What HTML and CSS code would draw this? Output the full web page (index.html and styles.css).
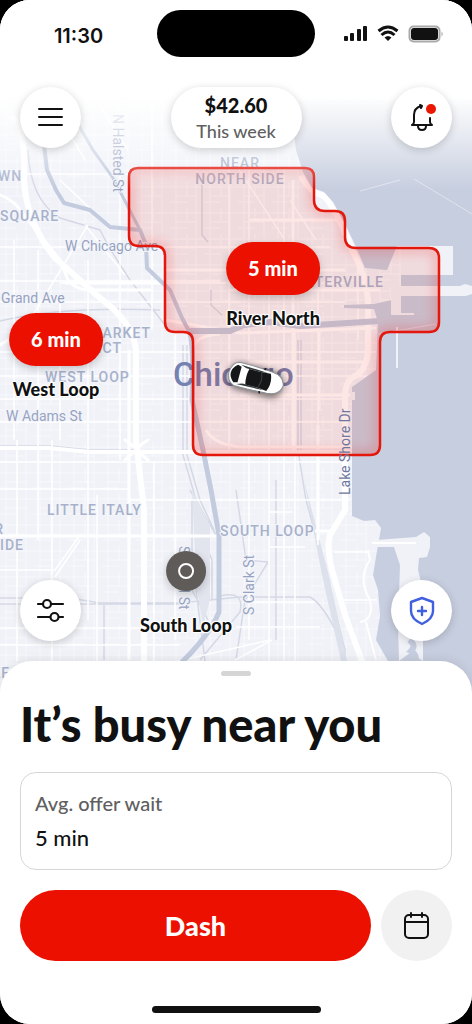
FILE: index.html
```html
<!DOCTYPE html>
<html lang="en">
<head>
  <meta charset="UTF-8">
  <meta name="viewport" content="width=device-width, initial-scale=1">
  <title>Dash</title>
  <link rel="stylesheet" href="styles.css">
</head>
<body>
  <main class="phone">
    <section class="stage">
      <div class="map">
        <svg class="map-art" viewBox="0 0 472 710" preserveAspectRatio="xMidYMin slice" aria-hidden="true">
          <defs>
            <pattern id="blocks" width="34" height="26" patternUnits="userSpaceOnUse">
              <path d="M6 0V26M17 0V14M26 0V26M0 5H34M6 14H26M0 20H17" fill="none" stroke="#fff" stroke-width="1" opacity=".5"/>
            </pattern>
            <linearGradient id="fade" x1="0" y1="0" x2="0" y2="1">
              <stop offset="0" stop-color="#fff"/>
              <stop offset=".5" stop-color="#fff"/>
              <stop offset="1" stop-color="#fff" stop-opacity="0"/>
            </linearGradient>
            <path id="zone" d="M138 168H305Q314 168 314 177V200Q314 211 325 211H335Q345 211 345 221V237Q345 248 356 248H429Q439 248 439 258V322Q439 332 429 332H390Q380 332 380 342V445Q380 455 370 455H203Q193 455 193 445V342Q193 332 183 332H175Q165 332 165 322V256Q165 246 155 246H139Q129 246 129 236V177Q129 168 138 168Z"/>
            <clipPath id="zone-clip"><use href="#zone"/></clipPath>
            <filter id="glow" x="-20%" y="-20%" width="140%" height="140%"><feGaussianBlur stdDeviation="6"/></filter>
            <filter id="car-shadow" x="-30%" y="-50%" width="160%" height="200%"><feGaussianBlur stdDeviation="3"/></filter>
          </defs>

          <rect width="472" height="710" fill="#f0f2f8"/>
          <rect width="472" height="710" fill="url(#blocks)"/>

          <!-- rail lines -->
          <g fill="none" stroke="#d5d9e5" stroke-width="1.5">
            <path d="M28 150Q30 200 60 218L100 230Q110 250 130 280L165 325"/>
            <path d="M0 321Q60 306 160 310M202 180V235L208 242M211 290V305L222 315"/>
            <path d="M0 598H70L100 603H180L240 597H310Q325 605 345 650V665M0 604H180"/>
            <path d="M0 446H50L90 450H140M183 345V455L196 500V590L205 661M187 345V455L200 500L214 530M190 490L216 535M192 500V590L208 620M196 520L212 560V600"/>
            <path d="M298 340V450L306 500L325 570L345 650M301 340V450M276 480V640M236 490L246 560L268 562M268 562L245 600L236 660M104 605V660M220 596Q245 590 240 612L200 660"/>
          </g>
          <path d="M304 480L330 580L347 661H341L322 575Z" fill="#dde1eb"/>
          <path d="M192 490L210 525V600L203 625L197 590Z" fill="#e2e5ee"/>

          <!-- secondary streets -->
          <g fill="none" stroke="#fff" stroke-width="1.5">
            <path d="M0 174H129M0 247H330M0 281H220M60 283H350M0 302H345M0 352H380M0 376H380M0 399H345M0 422H345M0 462H345M0 489H130M130 500H350"/>
            <path d="M14 240V440M38 250V540M60 300V440M88 260V620M120 120V460M152 100V330M175 330V640M229 168V455M249 168V640M269 290V661M284 168V661M295 330V661M318 290V545M358 270V340M154 462V661M97 495V661M17 440V661M52 440V661"/>
            <path d="M0 570H55L80 535M55 577L80 540M0 628H150M0 645H180M236 627H320M248 602H315M268 547H305M268 512H292"/>
            <path d="M50 100L85 160M96 100L128 150M160 100L200 150M30 320L88 225M85 225L125 275M60 180L97 215M236 165L285 240M290 200L316 240"/>
            <path d="M334 552H368M343 600H377M178 661L270 640M235 660L272 640"/>
          </g>
          <g fill="none" stroke="#fff" stroke-width="3">
            <path d="M0 536H220M315 531H330M165 270H345M229 290H380M250 220H340M65 283L165 283M129 660V350M165 320L240 333L376 328M194 345Q200 335 220 334M249 362H368M319 330V410M318 425V540M240 395H355"/>
            <path d="M293 180V455M206 430Q215 445 240 447H380"/>
          </g>

          <!-- expressways -->
          <g fill="none" stroke="#fff" stroke-linecap="round" stroke-linejoin="round">
            <path d="M14 118Q26 135 24 180Q26 222 55 258L100 298Q133 322 136 350V440L144 510V661" stroke-width="6"/>
            <path d="M-2 194Q15 200 24 215L60 260L68 280Q75 290 90 290H150" stroke-width="3"/>
            <path d="M-2 448H48L90 452H380" stroke-width="4"/>
            <path d="M125 440L136 448L148 440M125 460L136 450L148 460M0 345L25 330" stroke-width="3"/>
            <path d="M302 178Q310 192 324 196Q338 212 352 250Q366 275 368 300V340Q370 365 357 375Q344 380 345 400V510L330 535Q326 545 332 570L345 615L362 661" stroke-width="6"/>
          </g>

          <!-- river -->
          <g fill="none" stroke="#c3cbde" stroke-linejoin="round">
            <path d="M44 145L47 170L56 190L64 203L90 210L110 227L140 230L146 245L147 268L170 290L182 318L190 333" stroke-width="4"/>
            <path d="M64 100L93 150L113 178L140 230" stroke-width="3"/>
            <path d="M190 331H230L244 325L270 322L300 326L380 321" stroke-width="6"/>
            <path d="M190 333Q194 350 192 400L203 450L211 490L219 535V612Q210 635 180 664" stroke-width="5"/>
          </g>

          <!-- lake, harbour and lagoon -->
          <path d="M290 100L296 150L303 172L312 188L324 192L333 202L346 226L357 249L365 268L387 270L397 246H453V275H401V285H472V100Z" fill="#c7cedf"/>
          <path d="M472 284H401V297H472ZM472 297H392V300L374 304L344 305V308L374 309L378 322L376 370L352 387V516L364 521L375 520L381 528L378 545L373 575L378 590L380 616L376 640L388 661V710H472Z" fill="#c7cedf"/>
          <g fill="#f0f2f8">
            <path d="M401 246H453V275H401ZM391 286H460L465 284L472 286V294L466 296H401V314H391Z"/>
            <path d="M350 392H355V400H350ZM391 313H414V315H391Z"/>
            <path d="M376 540L416 537L424 532L430 537V547L427 557L419 558L418 570L423 590V661L410 653L399 661L398 625L400 565L394 547H376Z"/>
          </g>
          <path d="M409 640Q417 645 411 651Q420 656 412 668" fill="none" stroke="#c7cedf" stroke-width="6"/>
          <g fill="none" stroke="#f0f2f8">
            <path d="M397 327V368" stroke-width="2"/>
            <path d="M360 191L400 180M414 179L472 214M378 334L436 324" opacity=".6"/>
            <path d="M372 543H416M368 550L370 560Q357 578 370 600Q374 620 360 622M366 622L376 660" stroke="#fff" stroke-width="2"/>
          </g>

          <g class="street">
            <text x="65" y="251">W Chicago Ave</text>
            <text x="1" y="303">Grand Ave</text>
            <text x="6" y="421">W Adams St</text>
            <text transform="translate(113 114) rotate(90)">N Halsted St</text>
            <text transform="translate(179 546) rotate(90)">S Canal St</text>
            <text transform="translate(254 615) rotate(-90)">S Clark St</text>
          </g>
          <g class="area">
            <text x="-22" y="181">TOWN</text>
            <text x="0" y="221">SQUARE</text>
            <text x="240" y="168" text-anchor="middle">NEAR</text>
            <text x="240" y="184" text-anchor="middle">NORTH SIDE</text>
            <text x="384" y="287" text-anchor="end">STREETERVILLE</text>
            <text x="151" y="338" text-anchor="end">MARKET</text>
            <text x="122" y="353" text-anchor="end">DISTRICT</text>
            <text x="45" y="382">WEST LOOP</text>
            <text x="47" y="515">LITTLE ITALY</text>
            <text x="4" y="534" text-anchor="end">LOWER</text>
            <text x="24" y="550" text-anchor="end">WEST SIDE</text>
            <text x="220" y="536">SOUTH LOOP</text>
            <text x="10" y="678" text-anchor="end">EF</text>
          </g>
          <text class="city" x="173" y="386">Chicago</text>

          <!-- busy zone -->
          <use href="#zone" fill="#f01400" fill-opacity=".1"/>
          <g clip-path="url(#zone-clip)">
            <use href="#zone" fill="none" stroke="#f01400" stroke-width="10" stroke-opacity=".2" filter="url(#glow)"/>
          </g>
          <use href="#zone" fill="none" stroke="#e3170c" stroke-width="2.5"/>
          <text class="shore" transform="translate(350 495) rotate(-90)">Lake Shore Dr</text>
          <rect width="472" height="190" fill="url(#fade)"/>

          <!-- car -->
          <g transform="translate(256 379) rotate(15)">
            <rect x="-28" y="-12" width="56" height="27" rx="12" fill="#000" opacity=".5" filter="url(#car-shadow)"/>
            <path d="M-20 -12Q-27 -10 -28 0Q-27 10 -20 12L-6 12L14 11Q27 10 28 0Q27 -10 14 -11L-6 -12Z" fill="#fff" stroke="#8b9095"/>
            <path d="M-21 -9Q-26 -5 -26 0Q-26 5 -21 9L-17 8V-8Z" fill="#151719"/>
            <path d="M-18 -10L10 -9L4 -8H-12ZM-18 10L10 9L4 8H-12Z" fill="#33383b"/>
            <path d="M-9 -8H4L13 -9Q17 0 13 9L4 8H-9Q-11 0 -9 -8Z" fill="#151719"/>
            <path d="M4 -7Q7 0 4 7" fill="none" stroke="#3b4044"/>
            <path d="M6 -11L7 -13M6 11L7 13" stroke="#151719" stroke-width="1.5"/>
          </g>
        </svg>

        <button class="pin pin-river">
          <span class="pin-time">5 min</span>
          <span class="pin-name">River North</span>
        </button>
        <button class="pin pin-west">
          <span class="pin-time">6 min</span>
          <span class="pin-name">West Loop</span>
        </button>
        <button class="pin pin-south">
          <span class="pin-dot"></span>
          <span class="pin-name">South Loop</span>
        </button>
      </div>

      <header class="status">
        <time class="clock">11:30</time>
        <div class="island"></div>
        <svg class="signals" width="100" height="18" viewBox="0 0 100 18" aria-hidden="true">
          <g fill="#111">
            <rect x="0" y="11" width="4" height="5" rx="1"/>
            <rect x="6" y="8" width="4" height="8" rx="1"/>
            <rect x="13" y="4" width="4" height="12" rx="1"/>
            <rect x="19" y="1" width="4" height="15" rx="1"/>
            <path d="M44 16L40.500 12.500Q44 9.500 47.500 12.500Z"/>
            <rect x="67" y="3" width="27" height="12" rx="3"/>
          </g>
          <path d="M34.500 6Q44 -2 53.500 6M37.500 10Q44 4 50.500 10" fill="none" stroke="#111" stroke-width="3"/>
          <rect x="65.500" y="1.500" width="30" height="15" rx="4" fill="none" stroke="#aaa" stroke-width="2"/>
          <path d="M97.500 6.500Q100 9 97.500 11.500Z" fill="#aaa"/>
        </svg>
      </header>

      <div class="controls">
        <button class="round" aria-label="Menu">
          <svg width="28" height="28" viewBox="0 0 28 28" fill="none" stroke="#111" stroke-width="2" stroke-linecap="round"><path d="M2 5H25M2 13H25M2 21H25"/></svg>
        </button>
        <button class="earnings">
          <strong>$42.60</strong>
          <span>This week</span>
        </button>
        <button class="round" aria-label="Notifications">
          <svg width="28" height="32" viewBox="0 0 28 32" fill="none" stroke="#111" stroke-width="2" stroke-linecap="round" stroke-linejoin="round">
            <path d="M13 4Q6 6 6 13V20Q6 22 4 23H24Q22 22 22 20V16M10 24Q10 28 14 28Q18 28 18 24M12 3L14 4L13 6"/>
            <circle cx="23" cy="7" r="5" fill="#eb1700" stroke="none"/>
          </svg>
        </button>
      </div>

      <div class="controls controls-bottom">
        <button class="round" aria-label="Filters">
          <svg width="28" height="28" viewBox="0 0 28 28" fill="none" stroke="#111" stroke-width="2.200" stroke-linecap="round"><path d="M1 7H6M15 7H26M1 20H13M22 20H26"/><circle cx="10" cy="7" r="4"/><circle cx="17.500" cy="20" r="4"/></svg>
        </button>
        <button class="round" aria-label="Safety">
          <svg width="28" height="30" viewBox="0 0 28 30" fill="none" stroke="#4060e0" stroke-width="2.400" stroke-linecap="round" stroke-linejoin="round"><path d="M14 2L25 6V15Q25 23 14 28Q3 23 3 15V6ZM14 11V19M10 15H18"/></svg>
        </button>
      </div>
    </section>

    <section class="sheet">
      <div class="handle"></div>
      <h1>It’s busy near you</h1>
      <dl class="wait">
        <dt>Avg. offer wait</dt>
        <dd>5 min</dd>
      </dl>
      <div class="actions">
        <button class="dash">Dash</button>
        <button class="schedule" aria-label="Schedule">
          <svg width="28" height="30" viewBox="0 0 28 30" fill="none" stroke="#111" stroke-width="2" stroke-linecap="round"><rect x="2" y="4" width="23" height="23" rx="4"/><path d="M2 11H25M8 2V6M19 2V6"/></svg>
        </button>
      </div>
      <div class="home"></div>
    </section>
  </main>
</body>
</html>
```
FILE: styles.css
```css
* {
  box-sizing: border-box;
}
body {
  margin: 0;
  background: #000;
  color: #111;
  font-family: Lato, "Liberation Sans", sans-serif;
}
button {
  padding: 0;
  border: 0;
  color: inherit;
  font: inherit;
  cursor: pointer;
}
.phone {
  display: flex;
  flex-direction: column;
  min-height: 100vh;
  overflow: hidden;
  border-radius: 30px;
  background: #fff;
}

/* map */
.stage {
  position: relative;
  display: flex;
  flex: 1;
  flex-direction: column;
  min-height: 560px;
}
.map {
  position: absolute;
  inset: 0 0 -48px;
  overflow: hidden;
}
.map-art {
  display: block;
  width: 100%;
  height: 100%;
  font-family: Roboto, sans-serif;
}
.street, .area {
  fill: #97a3c1;
  stroke: #f3f5fa;
  stroke-width: 2px;
  paint-order: stroke;
  font-size: 14px;
}
.area {
  fill: #a7b1ca;
  font-weight: 500;
  letter-spacing: 1px;
}
.city {
  fill: #7382b0;
  font-size: 33px;
  font-weight: 500;
}
.shore {
  fill: #6d779f;
  font-size: 14px;
}
.pin {
  position: absolute;
  display: flex;
  flex-direction: column;
  align-items: center;
  gap: 13px;
  background: none;
  transform: translateX(-50%);
}
.pin-river {
  left: calc(50% + 37px);
  top: 242px;
}
.pin-west {
  left: calc(50% - 180px);
  top: 313px;
}
.pin-south {
  left: calc(50% - 50px);
  top: 551px;
  gap: 24px;
}
.pin-time {
  padding: 14px 22px 15px;
  border-radius: 27px;
  background: #eb1000;
  box-shadow: 0 3px 8px rgba(0, 0, 0, 0.2);
  color: #fff;
  font-size: 20px;
  font-weight: 900;
  line-height: 24px;
}
.pin-name {
  font-size: 18px;
  font-weight: 900;
  line-height: 20px;
  white-space: nowrap;
  text-shadow: 0 0 2px #fff, 1px 1px 1px #fff, -1px -1px 1px #fff, 1px -1px 1px #fff, -1px 1px 1px #fff;
}
.pin-dot {
  display: grid;
  place-items: center;
  width: 40px;
  height: 40px;
  border-radius: 50%;
  background: #5f5b59;
  box-shadow: 0 3px 8px rgba(0, 0, 0, 0.2);
}
.pin-dot::after {
  content: "";
  width: 12px;
  height: 12px;
  border: 2px solid #fff;
  border-radius: 50%;
}

/* status bar and floating buttons */
.status {
  position: relative;
  display: grid;
  grid-template-columns: 1fr 158px 1fr;
  align-items: center;
  padding: 10px 0 30px;
}
.clock {
  justify-self: center;
  padding-top: 4px;
  font-family: Inter, sans-serif;
  font-size: 20px;
  font-weight: 600;
  line-height: 24px;
}
.island {
  height: 47px;
  border-radius: 24px;
  background: #000;
}
.signals {
  justify-self: center;
}
.controls {
  position: relative;
  display: flex;
  align-items: center;
  justify-content: space-between;
  padding: 0 20px;
  pointer-events: none;
}
.controls button {
  pointer-events: auto;
}
.controls-bottom {
  margin-top: auto;
  padding-bottom: 20px;
}
.round {
  display: grid;
  place-items: center;
  width: 61px;
  height: 61px;
  border-radius: 50%;
  background: #fff;
  box-shadow: 0 2px 8px rgba(0, 0, 0, 0.18);
}
.earnings {
  display: flex;
  flex-direction: column;
  align-items: center;
  justify-content: center;
  gap: 2px;
  min-width: 131px;
  height: 61px;
  padding: 0 24px;
  border-radius: 31px;
  background: #fff;
  box-shadow: 0 2px 8px rgba(0, 0, 0, 0.18);
}
.earnings strong {
  font-size: 20px;
  font-weight: 900;
  line-height: 24px;
}
.earnings span {
  color: #606060;
  font-size: 18px;
  font-weight: 500;
  line-height: 24px;
}

/* bottom sheet */
.sheet {
  position: relative;
  padding: 10px 20px 11px;
  border-radius: 32px 32px 0 0;
  background: #fff;
  box-shadow: 0 -2px 10px rgba(0, 0, 0, 0.08);
}
.handle {
  width: 30px;
  height: 5px;
  margin: 0 auto;
  border-radius: 3px;
  background: #d5d5d5;
}
h1 {
  margin: 18px 0;
  font-size: 47px;
  font-weight: 900;
  line-height: 60px;
}
.wait {
  margin: 0;
  padding: 18px 14px 19px;
  border: 1px solid #d6d6d6;
  border-radius: 16px;
}
.wait dt {
  color: #606060;
  font-size: 20px;
  font-weight: 500;
  line-height: 24px;
}
.wait dd {
  margin: 11px 0 0;
  font-size: 22px;
  font-weight: 500;
  line-height: 24px;
}
.actions {
  display: flex;
  gap: 10px;
  margin-top: 20px;
}
.dash {
  flex: 1;
  height: 71px;
  border-radius: 36px;
  background: #eb1000;
  color: #fff;
  font-size: 27px;
  font-weight: 900;
}
.schedule {
  display: grid;
  place-items: center;
  width: 71px;
  height: 71px;
  border-radius: 50%;
  background: #f1f1f1;
}
.home {
  width: 169px;
  height: 7px;
  margin: 45px auto 0;
  border-radius: 4px;
  background: #111;
}
```
